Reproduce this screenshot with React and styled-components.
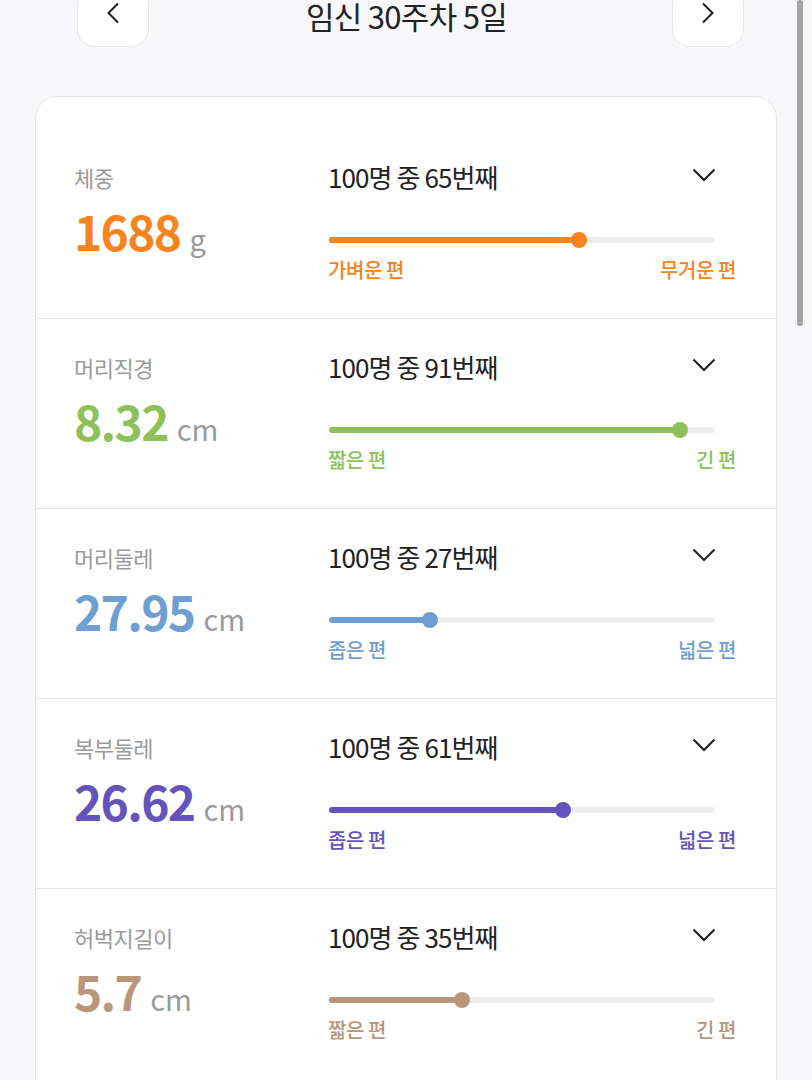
import React from "react";
import styled, { createGlobalStyle } from "styled-components";

const Global = createGlobalStyle`
  html, body { margin: 0; padding: 0; }
  body {
    background: #f8f8fa;
    height: 1080px;
    overflow: hidden;
    font-family: "Noto Sans CJK KR", "Noto Sans", sans-serif;
    color: #222;
  }
`;

const Page = styled.div`
  width: 812px;
  height: 1080px;
  overflow: hidden;
  position: relative;
`;

const Header = styled.div`
  display: grid;
  grid-template-columns: 72px 1fr 72px;
  align-items: center;
  padding: 0 68px 0 77px;
  margin-top: -13px;
  height: 60px;
`;

const NavButton = styled.button`
  width: 72px;
  height: 60px;
  box-sizing: border-box;
  background: #fff;
  border: 1px solid #e6e6e8;
  border-radius: 18px;
  display: flex;
  align-items: center;
  justify-content: center;
  padding: 0 0 8px 0;
  cursor: pointer;
`;

const Title = styled.h1`
  margin: 0 0 0 -8px;
  text-align: center;
  font-size: 31px;
  font-weight: 400;
  letter-spacing: -0.7px;
  color: #222;
  line-height: 40px;
  padding-bottom: 2px;
`;

const Card = styled.div`
  margin: 49px 35px 0;
  background: #fff;
  border: 1px solid #e4e4e6;
  border-radius: 22px;
  padding: 32px 0 60px;
`;

const Row = styled.div`
  display: grid;
  grid-template-columns: 254px 1fr;
  height: 190px;
  box-sizing: border-box;
  padding: 33px 40px 0 38px;
  border-bottom: 1px solid #e6e6e8;
  &:last-child { border-bottom: none; }
`;

const Left = styled.div`
  display: flex;
  flex-direction: column;
`;

const Label = styled.div`
  font-size: 22px;
  line-height: 30px;
  color: #9a9a9a;
  letter-spacing: -0.5px;
`;

const ValueLine = styled.div`
  display: flex;
  align-items: baseline;
  margin-top: 8px;
  gap: 9px;
`;

const Value = styled.span`
  font-size: 48px;
  line-height: 60px;
  font-weight: 700;
  letter-spacing: -1.7px;
  color: ${(p) => p.$color};
`;

const Unit = styled.span`
  font-size: 29px;
  color: #9a9a9a;
  font-weight: 400;
`;

const Right = styled.div`
  display: flex;
  flex-direction: column;
`;

const RankLine = styled.div`
  display: flex;
  align-items: center;
  justify-content: space-between;
  height: 30px;
  padding-right: 20px;
`;

const Rank = styled.span`
  font-size: 26px;
  line-height: 30px;
  letter-spacing: -0.9px;
  color: #222;
`;

const Chevron = styled.svg`
  display: block;
  margin-top: -4px;
`;

const SliderWrap = styled.div`
  height: 16px;
  margin: 40px 21px 0 1px;
  display: flex;
  align-items: center;
`;

const Track = styled.div`
  width: 100%;
  height: 6px;
  border-radius: 3px;
  background: #ededed;
  position: relative;
`;

const Fill = styled.div`
  position: absolute;
  left: 0;
  top: 0;
  bottom: 0;
  border-radius: 3px;
  background: ${(p) => p.$color};
`;

const Knob = styled.div`
  position: absolute;
  top: 50%;
  width: 16px;
  height: 16px;
  border-radius: 50%;
  margin: -8px 0 0 -8px;
  background: ${(p) => p.$color};
`;

const Ends = styled.div`
  display: flex;
  justify-content: space-between;
  margin-top: 9px;
  font-size: 20px;
  line-height: 26px;
  font-weight: 500;
  letter-spacing: -0.4px;
  color: ${(p) => p.$color};
`;

const ScrollThumb = styled.div`
  position: absolute;
  right: 9px;
  top: 0;
  width: 6px;
  height: 326px;
  border-radius: 3px;
  background: #a4a4a4;
`;

const rows = [
  { label: "체중", value: "1688", unit: "g", rank: 65, color: "#f7831c", lo: "가벼운 편", hi: "무거운 편" },
  { label: "머리직경", value: "8.32", unit: "cm", rank: 91, color: "#8fc15a", lo: "짧은 편", hi: "긴 편" },
  { label: "머리둘레", value: "27.95", unit: "cm", rank: 27, color: "#6f9fd2", lo: "좁은 편", hi: "넓은 편" },
  { label: "복부둘레", value: "26.62", unit: "cm", rank: 61, color: "#6553bd", lo: "좁은 편", hi: "넓은 편" },
  { label: "허벅지길이", value: "5.7", unit: "cm", rank: 35, color: "#b9957a", lo: "짧은 편", hi: "긴 편" },
];

const ChevronDown = () => (
  <Chevron width="24" height="14" viewBox="0 0 24 14">
    <path d="M1.5 1.5 L12 12 L22.5 1.5" fill="none" stroke="#1e1e1e" strokeWidth="2" />
  </Chevron>
);

export default function App() {
  return (
    <Page>
      <Global />
      <Header>
        <NavButton aria-label="이전">
          <svg width="14" height="22" viewBox="0 0 14 22">
            <path d="M12 1.5 L2.5 11 L12 20.5" fill="none" stroke="#1e1e1e" strokeWidth="2" />
          </svg>
        </NavButton>
        <Title>임신 30주차 5일</Title>
        <NavButton aria-label="다음">
          <svg width="14" height="22" viewBox="0 0 14 22">
            <path d="M2 1.5 L11.5 11 L2 20.5" fill="none" stroke="#1e1e1e" strokeWidth="2" />
          </svg>
        </NavButton>
      </Header>
      <Card>
        {rows.map((r) => {
          const pct = ((r.rank - 1) / 99) * 100;
          return (
            <Row key={r.label}>
              <Left>
                <Label>{r.label}</Label>
                <ValueLine>
                  <Value $color={r.color}>{r.value}</Value>
                  <Unit>{r.unit}</Unit>
                </ValueLine>
              </Left>
              <Right>
                <RankLine>
                  <Rank>100명 중 {r.rank}번째</Rank>
                  <ChevronDown />
                </RankLine>
                <SliderWrap>
                  <Track>
                    <Fill $color={r.color} style={{ width: `${pct}%` }} />
                    <Knob $color={r.color} style={{ left: `${pct}%` }} />
                  </Track>
                </SliderWrap>
                <Ends $color={r.color}>
                  <span>{r.lo}</span>
                  <span>{r.hi}</span>
                </Ends>
              </Right>
            </Row>
          );
        })}
      </Card>
      <ScrollThumb />
    </Page>
  );
}
